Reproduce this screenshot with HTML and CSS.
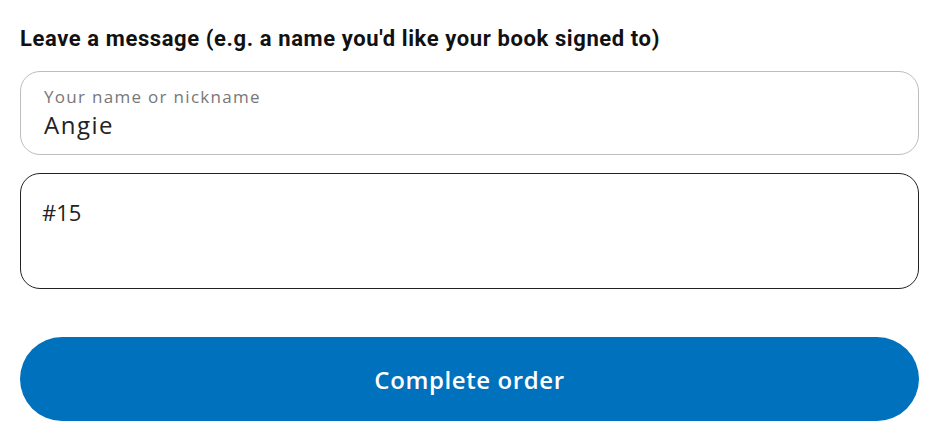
FILE: index.html
```html
<!DOCTYPE html>
<html lang="en">
<head>
    <meta charset="UTF-8">
    <meta name="viewport" content="width=device-width, initial-scale=1.0">
    <title>Complete order</title>
    <link rel="stylesheet" href="styles.css">
</head>
<body>

<form class="order-form">
    <h3 class="form-title">Leave a message (e.g. a name you'd like your book signed to)</h3>

    <!-- 签名用的名字 -->
    <label class="field">
        <span class="field-label">Your name or nickname</span>
        <input class="field-input" type="text" value="Angie">
    </label>

    <!-- 留言 -->
    <textarea class="field-area">#15</textarea>

    <button class="submit-btn" type="button">Complete order</button>
</form>

</body>
</html>
```

FILE: styles.css
```css
body {
    margin: 0;
    padding: 0;
    background: #fff;
    font-family: "Open Sans", Arial, sans-serif;
    color: #222;
}

.order-form {
    width: 899px;
    padding: 26px 0 0 20px;
    display: flex;
    flex-direction: column;
}

.form-title {
    margin: 0 0 19px 0;
    font-family: Roboto, Arial, sans-serif;
    font-size: 22px;
    font-weight: 700;
    line-height: 26px;
    letter-spacing: 0.6px;
    color: #111;
}

.field {
    display: flex;
    flex-direction: column;
    box-sizing: border-box;
    height: 84px;
    padding: 14px 23px 0 23px;
    border: 1px solid #bdbdbd;
    border-radius: 20px;
}

.field-label {
    font-size: 17px;
    line-height: 22px;
    letter-spacing: 1.3px;
    color: #777;
}

.field-input {
    border: none;
    outline: none;
    padding: 0;
    margin: 2px 0 0 0;
    font-family: inherit;
    font-size: 24px;
    line-height: 30px;
    letter-spacing: 1.5px;
    color: #222;
    background: transparent;
}

.field-area {
    box-sizing: border-box;
    height: 116px;
    margin-top: 18px;
    padding: 24px 21px;
    border: 1px solid #222;
    border-radius: 20px;
    font-family: inherit;
    font-size: 22px;
    line-height: 28px;
    color: #222;
    resize: none;
    outline: none;
}

.submit-btn {
    height: 84px;
    margin-top: 48px;
    border: none;
    border-radius: 42px;
    background-color: #0071bc;
    color: #fff;
    font-family: inherit;
    font-size: 24px;
    font-weight: 600;
    letter-spacing: 0.6px;
    cursor: pointer;
}
```
